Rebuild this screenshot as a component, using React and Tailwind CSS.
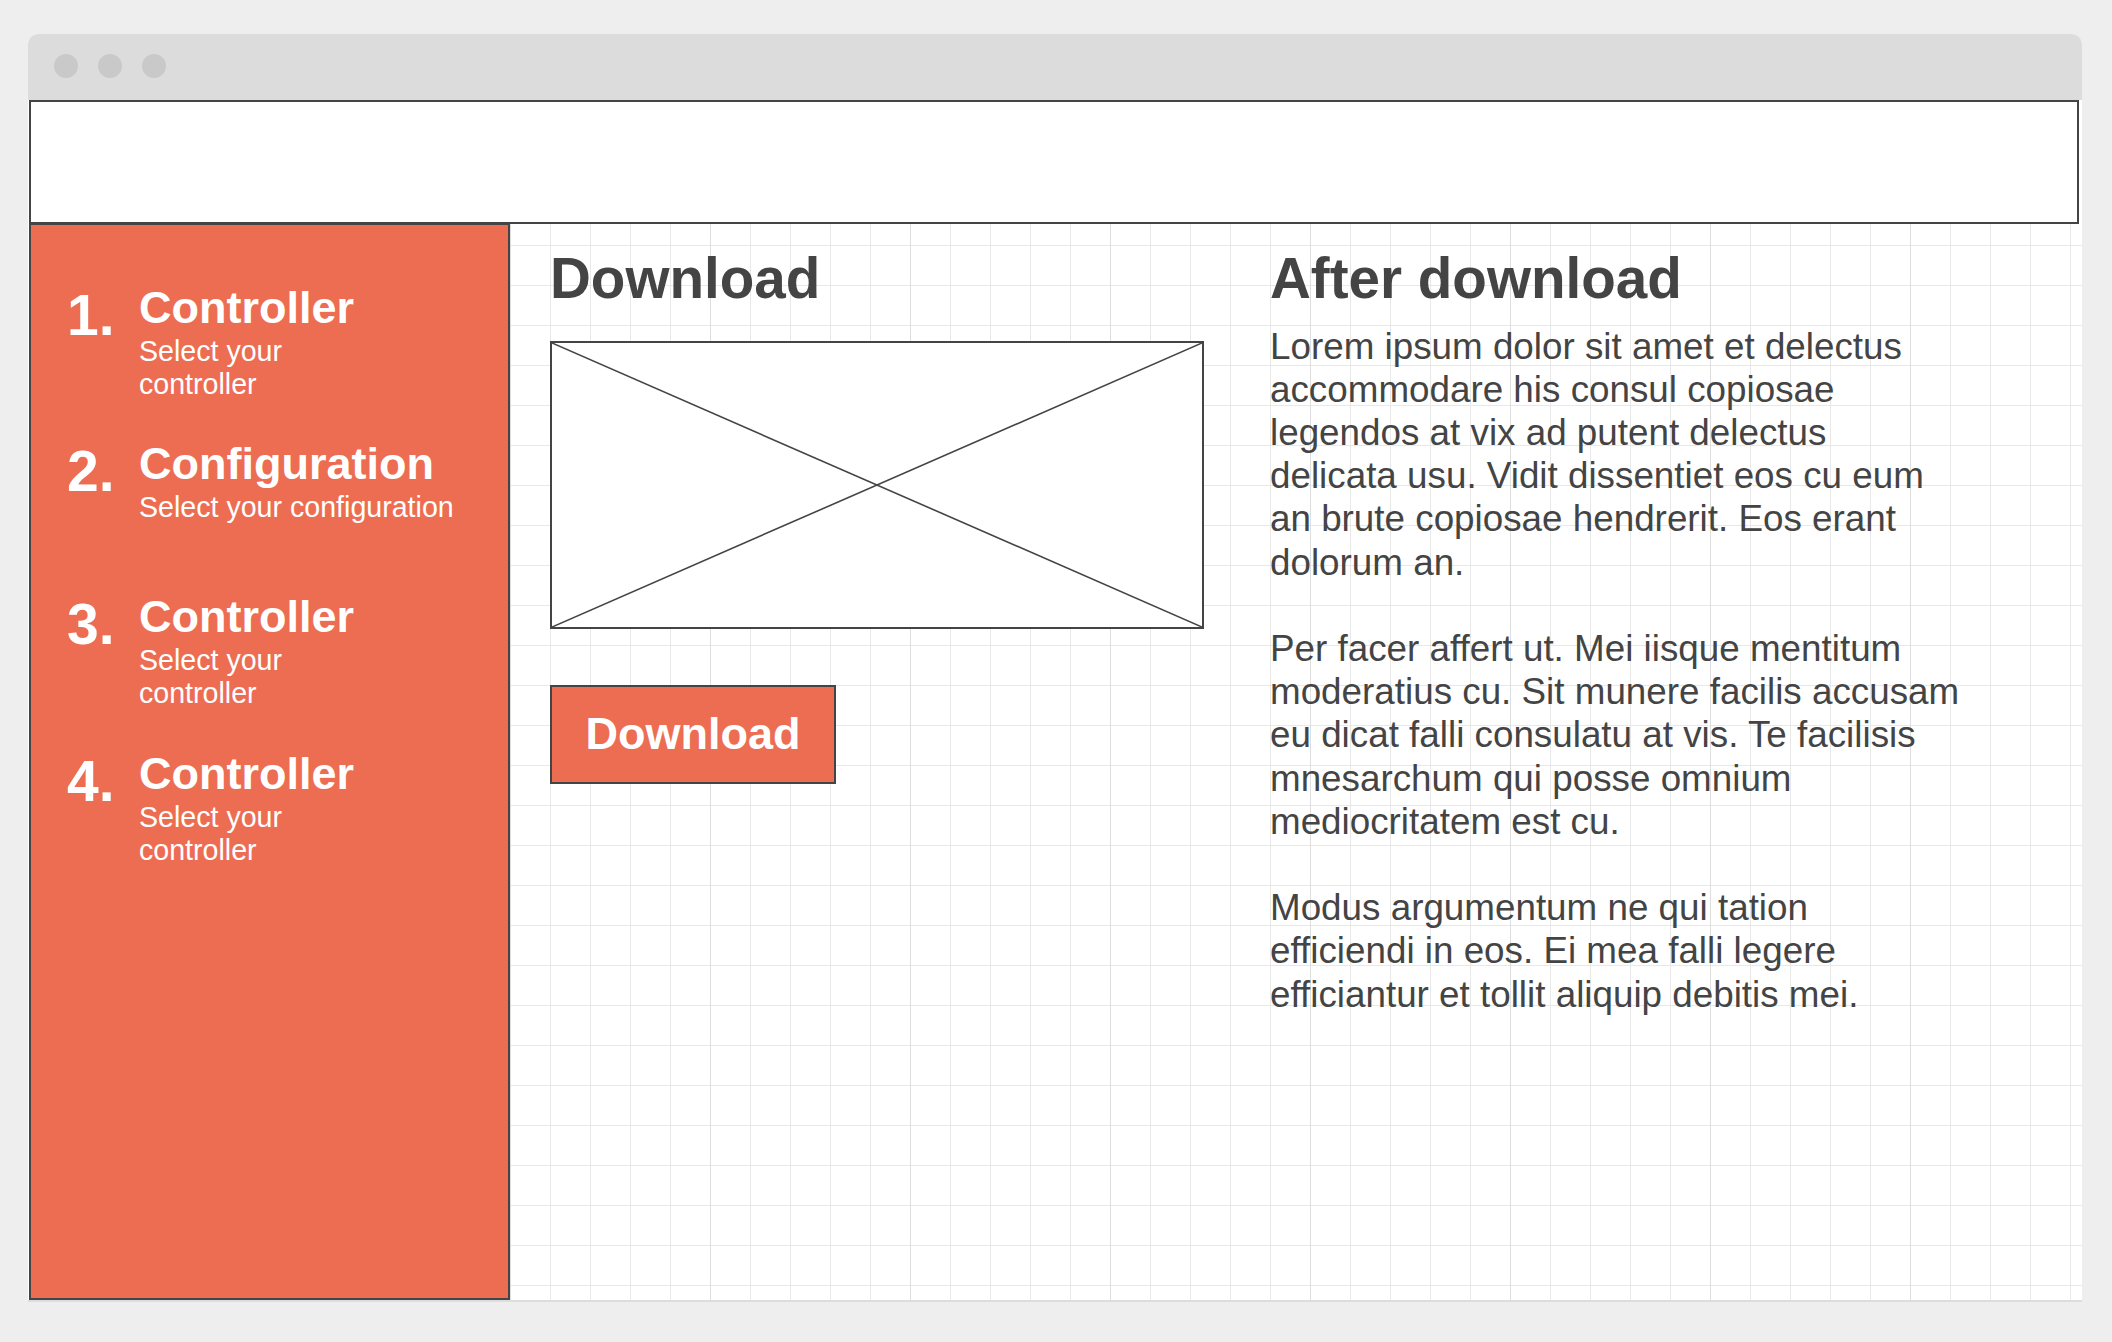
export default function App() {
  const items = [
    { n: "1.", t: "Controller", d: "Select your controller", narrow: true, h: "h-[156px]" },
    { n: "2.", t: "Configuration", d: "Select your configuration", narrow: false, h: "h-[153px]" },
    { n: "3.", t: "Controller", d: "Select your controller", narrow: true, h: "h-[157px]" },
    { n: "4.", t: "Controller", d: "Select your controller", narrow: true, h: "h-[157px]" },
  ];
  return (
    <div className="w-[2112px] h-[1342px] bg-[#eeeeee] pt-[34px] pl-[28px] font-['Liberation_Sans',Arial,sans-serif]">
      <div className="w-[2054px] h-[1266px] flex flex-col bg-white rounded-t-[10px] shadow-[0_2px_0_#dddddd]">
        <div className="h-[66px] shrink-0 bg-[#dcdcdc] rounded-t-[10px] flex items-center gap-[20px] pl-[26px] pb-[2px]">
          <span className="w-[24px] h-[24px] rounded-full bg-[#c9c9c9]" />
          <span className="w-[24px] h-[24px] rounded-full bg-[#c9c9c9]" />
          <span className="w-[24px] h-[24px] rounded-full bg-[#c9c9c9]" />
        </div>
        <div className="h-[124px] shrink-0 ml-[1px] mr-[3px] border-2 border-[#444444] bg-white" />
        <div className="flex flex-1 min-h-0">
          <aside className="w-[481px] ml-[1px] shrink-0 bg-[#ed6d53] border-2 border-t-[1px] border-[#444444] pt-[57px] pl-[36px] text-white">
            {items.map((it, i) => (
              <div key={i} className={`${it.h} flex`}>
                <div className="w-[72px] shrink-0 text-[57px] font-bold leading-[56px] mt-[5px]">{it.n}</div>
                <div>
                  <div className="text-[45px] font-bold leading-[51px] whitespace-nowrap">{it.t}</div>
                  <div className={`mt-[2px] text-[28.6px] leading-[33px] ${it.narrow ? "max-w-[220px]" : ""}`}>{it.d}</div>
                </div>
              </div>
            ))}
          </aside>
          <main className="flex-1 flex pl-[40px] pt-[27px] text-[#444444] [background-image:linear-gradient(to_right,#dedede_1.5px,transparent_1.5px),linear-gradient(to_right,#e8e8e8_1.5px,transparent_1.5px),linear-gradient(to_bottom,#e8e8e8_1.5px,transparent_1.5px)] [background-size:200px_100%,40px_40px,40px_40px] [background-position:0_0,0_0,0_21px]">
            <section className="w-[654px] shrink-0">
              <h1 className="text-[56.6px] font-bold leading-none">Download</h1>
              <div className="mt-[33px] w-[654px] h-[288px] border-2 border-[#444444] bg-white">
                <svg className="block w-full h-full" viewBox="0 0 100 100" preserveAspectRatio="none">
                  <line x1="0" y1="0" x2="100" y2="100" stroke="#444444" strokeWidth="1.6" vectorEffect="non-scaling-stroke" />
                  <line x1="100" y1="0" x2="0" y2="100" stroke="#444444" strokeWidth="1.6" vectorEffect="non-scaling-stroke" />
                </svg>
              </div>
              <div className="mt-[56px] w-[286px] h-[99px] border-2 border-[#444444] bg-[#ed6d53] text-white text-[45px] font-bold flex items-center justify-center">
                Download
              </div>
            </section>
            <section className="ml-[66px] w-[691px] shrink-0">
              <h2 className="text-[56.6px] font-bold leading-none">After download</h2>
              <p className="mt-[17px] text-[36.8px] leading-[43.2px]">
                Lorem ipsum dolor sit amet et delectus accommodare his consul copiosae legendos at vix ad putent delectus delicata usu. Vidit dissentiet eos cu eum an brute copiosae hendrerit. Eos erant dolorum an.
              </p>
              <p className="mt-[43.2px] text-[36.8px] leading-[43.2px]">
                Per facer affert ut. Mei iisque mentitum moderatius cu. Sit munere facilis accusam eu dicat falli consulatu at vis. Te facilisis mnesarchum qui posse omnium mediocritatem est cu.
              </p>
              <p className="mt-[43.2px] text-[36.8px] leading-[43.2px]">
                Modus argumentum ne qui tation efficiendi in eos. Ei mea falli legere efficiantur et tollit aliquip debitis mei.
              </p>
            </section>
          </main>
        </div>
      </div>
    </div>
  );
}
